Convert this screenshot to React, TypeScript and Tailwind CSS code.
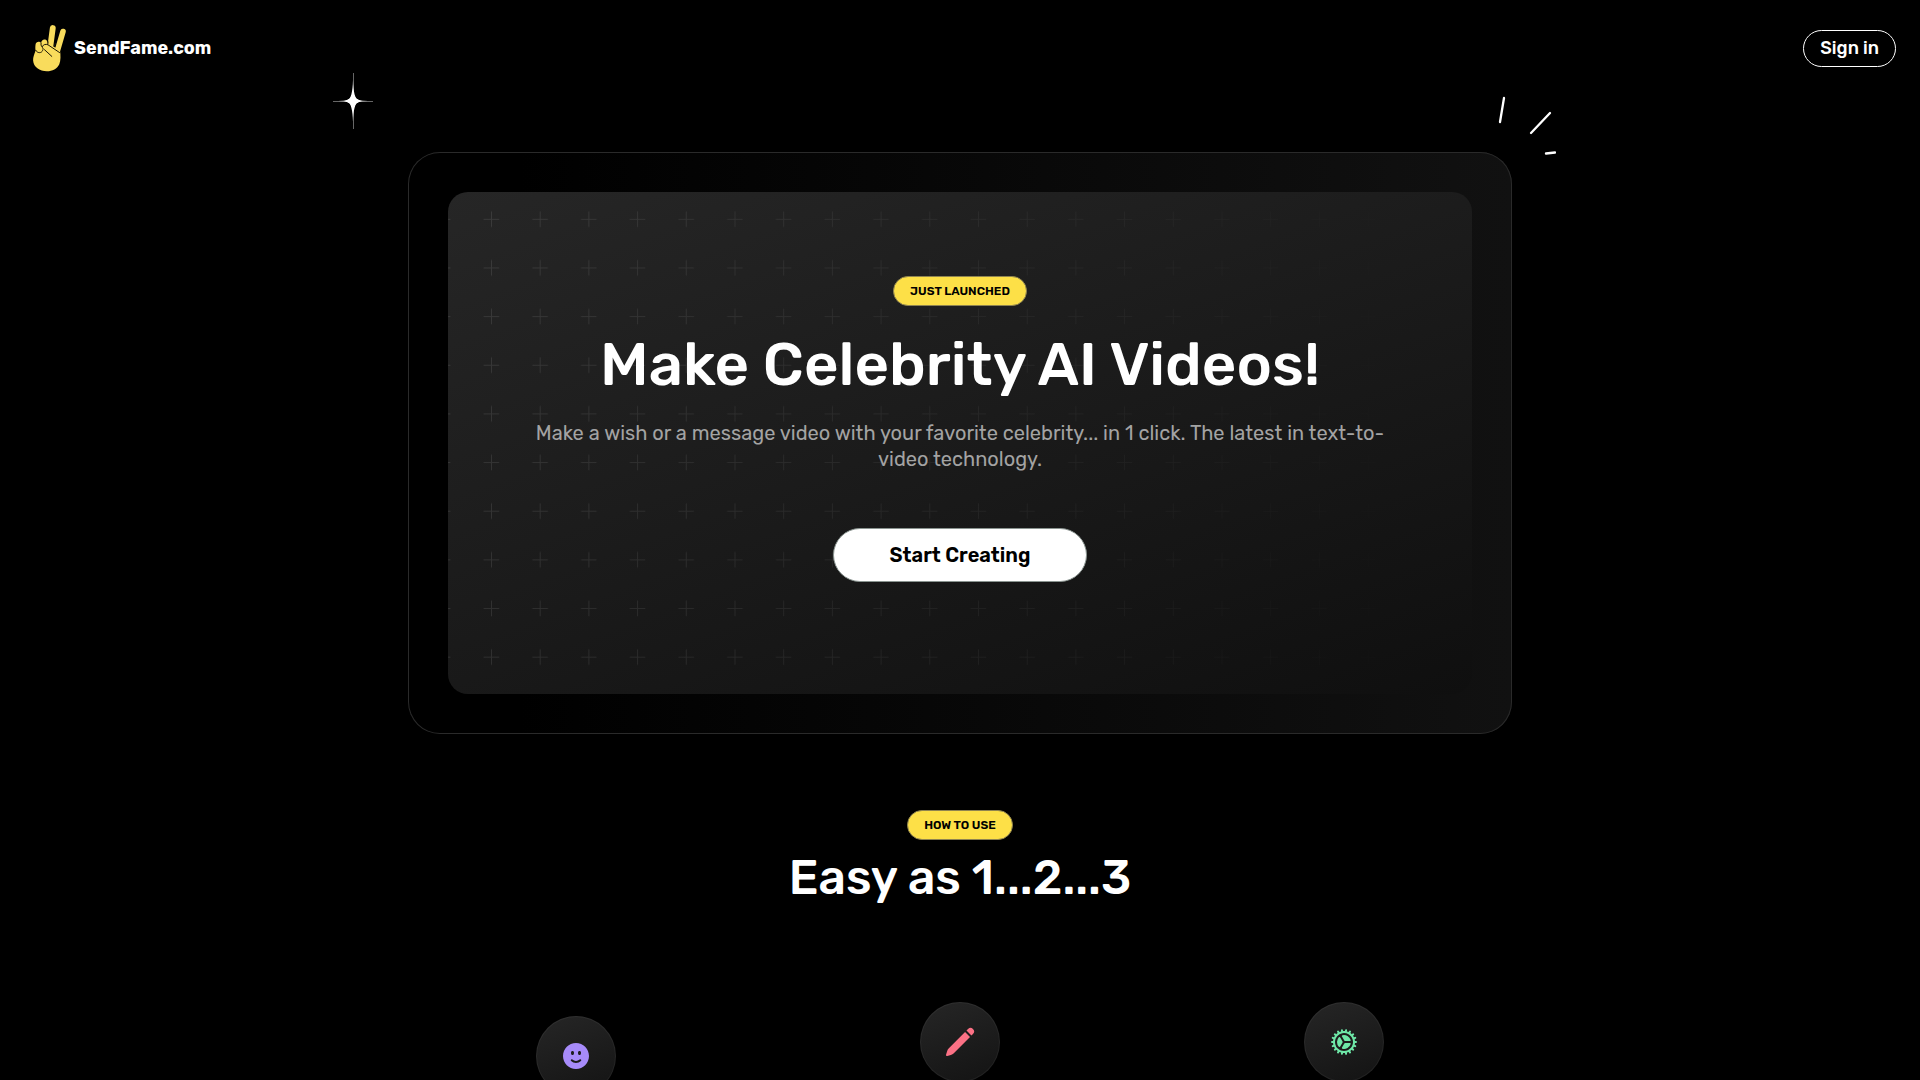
import { HiCog, HiFaceSmile, HiPencil } from "react-icons/hi2";
import type { ReactNode } from "react";

function VictoryHand() {
  return (
    <svg viewBox="0 0 36 48" className="h-12 w-9" aria-hidden="true">
      <g fill="none" stroke="#f9dc5c" strokeLinecap="round">
        <path d="M20.800 4 18.400 22" strokeWidth="5.800" />
        <path d="M31 7.500 25.300 27" strokeWidth="5.600" />
      </g>
      <path
        d="M3.600 20.200c.3-2.600 4-3.400 5.500-1.100.3-2.800 2.200-4.100 4.200-3.500 1.400.4 2.100 1.800 2.400 3.900L27.900 26c.9 5.400.9 10.600-.6 14.200-2 4.600-7 7-12.400 7C7.600 47.200 1.500 43 1.100 36.500.9 33.400 2.500 29.800 3.600 26.600c-.4-2.400-.3-4.600 0-6.400z"
        fill="#f9dc5c"
      />
      <g fill="none" stroke="#1d1806" strokeWidth="1" strokeLinecap="round" strokeLinejoin="round">
        <path d="m15.800 20.200.3-2.400M22.400 21.800l.8-2.400" />
        <path d="M27.600 28.600 16 20.800c-2.400-1-4.600-.2-5.400 1.400-.7 1.600.4 2.700 2 3.600l7.200 6.600" />
        <path d="M9.100 19.200c-.3 1.400-.1 2.400.7 3.400M3.800 26.400c1.200 2.400 4.600 3.200 6.400.9.300-.4.500-.9.500-1.400" />
      </g>
    </svg>
  );
}

function Sparkle() {
  return (
    <svg
      viewBox="0 0 40 58"
      className="pointer-events-none absolute -top-20 -left-[75px] h-[58px] w-10"
      aria-hidden="true"
    >
      <path d="M20.500 1v56M0 29.500h40" stroke="#fff" strokeOpacity=".4" strokeWidth="1" fill="none" />
      <path
        d="M20 8c.3 12 2 19 5.500 20q3.500.8 9.500 1-6 .2-9.500 1C22 31 20.300 38 20 50c-.3-12-2-19-5.500-20Q11 29.200 5 29q6-.2 9.500-1C18 27 19.700 20 20 8z"
        fill="#fff"
      />
      <path d="m20 21 2.800 5.200L28 29l-5.200 2.800L20 37l-2.800-5.200L12 29l5.200-2.800z" fill="#fff" />
    </svg>
  );
}

function Dashes() {
  return (
    <svg
      viewBox="0 0 60 60"
      className="pointer-events-none absolute -top-14 -right-11 size-[60px]"
      fill="none"
      stroke="#fff"
      strokeWidth="2.300"
      strokeLinecap="round"
      aria-hidden="true"
    >
      <path d="M8 2 4 26" />
      <path d="m54 17-19 20" />
      <path d="m50 57.500 9-1" />
    </svg>
  );
}

function PlusGrid() {
  return (
    <svg className="pointer-events-none absolute inset-0 h-full w-full" aria-hidden="true">
      <defs>
        <pattern id="plus" width="48.700" height="48.650" patternUnits="userSpaceOnUse" x="19.150" y="3">
          <path d="M24.350 16.500v15.500M16.500 24.350h15.500" stroke="#fff" strokeOpacity=".1" />
        </pattern>
        <linearGradient id="fade">
          <stop offset="0" stopColor="#fff" />
          <stop offset="1" stopColor="#fff" stopOpacity="0" />
        </linearGradient>
        <mask id="fadeMask">
          <rect width="100%" height="100%" fill="url(#fade)" />
        </mask>
      </defs>
      <rect width="100%" height="100%" fill="url(#plus)" mask="url(#fadeMask)" />
    </svg>
  );
}

function Badge({ children }: { children: ReactNode }) {
  return (
    <span className="inline-flex h-[30px] items-center rounded-full border border-[#8f8450] bg-[#fde047] px-4 text-xs font-semibold text-black uppercase">
      {children}
    </span>
  );
}

function Step({ children, className }: { children: ReactNode; className: string }) {
  return (
    <li className={`flex justify-center ${className}`}>
      <div className="flex size-20 items-center justify-center rounded-full bg-linear-160/srgb from-[#262626] to-[#131313] text-[32px] ring-1 ring-white/5 ring-inset">
        {children}
      </div>
    </li>
  );
}

export default function App() {
  return (
    <div className="h-screen overflow-hidden bg-black font-['Rubik',Inter,sans-serif] text-white">
      <header className="flex h-24 items-center justify-between pr-6 pl-8">
        <a href="#" className="flex items-center gap-1.5 text-lg font-bold">
          <VictoryHand />
          SendFame.com
        </a>
        <button className="h-[37px] rounded-full border border-white px-4 text-lg leading-none font-medium">
          Sign in
        </button>
      </header>

      <main>
        <section className="relative mx-auto mt-14 max-w-[1104px] rounded-[32px] bg-linear-to-r/srgb from-black from-10% to-[#111111] p-10 ring-1 ring-[#2a2a2a] ring-inset">
          <Sparkle />
          <Dashes />
          <div className="relative flex flex-col items-center overflow-hidden rounded-[20px] bg-linear-160/srgb from-[#262626] to-[#0f0f0f] px-20 pt-[84px] pb-28 text-center">
            <PlusGrid />
            <div className="relative flex flex-col items-center">
              <Badge>Just Launched</Badge>
              <h1 className="mt-7 text-[60px] leading-[62px] font-medium">Make Celebrity AI Videos!</h1>
              <p className="mt-6 text-xl leading-[26px] text-[#a3a3a3]">
                Make a wish or a message video with your favorite celebrity... in 1 click. The latest in
                text-to-video technology.
              </p>
              <button className="mt-14 h-[54px] rounded-full border border-[#8a9490] bg-white px-14 text-xl font-semibold text-black">
                Start Creating
              </button>
            </div>
          </div>
        </section>

        <section className="mx-auto mt-[76px] flex max-w-6xl flex-col items-center">
          <Badge>How to use</Badge>
          <h2 className="mt-3.5 text-5xl leading-[48px] font-medium">Easy as 1...2...3</h2>
          <ol className="mt-[100px] grid w-full grid-cols-3">
            <Step className="mt-3.5 text-[#a78bfa]">
              <HiFaceSmile aria-hidden="true" />
            </Step>
            <Step className="text-[#fb7185]">
              <HiPencil aria-hidden="true" />
            </Step>
            <Step className="text-[#6ee7a7]">
              <HiCog aria-hidden="true" />
            </Step>
          </ol>
        </section>
      </main>
    </div>
  );
}
